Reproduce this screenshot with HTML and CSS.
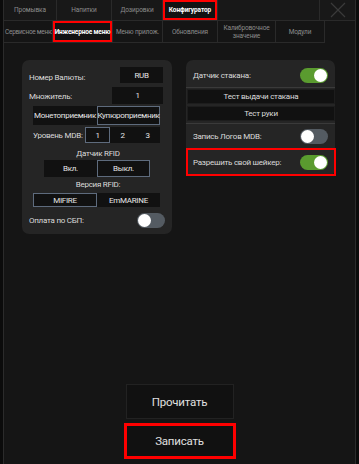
FILE: index.html
```html
<!DOCTYPE html>
<html>
	<head>
		<meta charset="UTF-8">
		<title>Конфигуратор</title>
		<link rel="stylesheet" href="styles.css">
	</head>
	<body>

		<!--рамка экрана-->
		<div class="screen">

			<!--верхние вкладки-->
			<div class="tabs">
				<div class="tab w53">Промывка</div>
				<div class="tab w55">Напитки</div>
				<div class="tab w51">Дозировки</div>
				<div class="tab w55 active marked">Конфигуратор</div>
				<div class="tab-space"></div>
				<div class="tab close">
					<svg width="16" height="16" viewBox="0 0 16 16">
						<path d="M1 1 L15 15 M15 1 L1 15" stroke="#3a3a3a" stroke-width="1.2" fill="none"/>
					</svg>
				</div>
			</div>

			<!--вкладки второго уровня-->
			<div class="subtabs">
				<div class="subtab w49 clip">Сервисное меню</div>
				<div class="subtab w60 active marked">Инженерное меню</div>
				<div class="subtab w50">Меню прилож.</div>
				<div class="subtab w55">Обновления</div>
				<div class="subtab w58">Калибровочное<br>значение</div>
				<div class="subtab w49">Модули</div>
			</div>

			<div class="main">

				<div class="cards">

					<!--левая панель-->
					<div class="card left">
						<div class="row">
							<span class="label">Номер Валюты:</span>
							<span class="box val-rub">RUB</span>
						</div>
						<div class="row">
							<span class="label">Множитель:</span>
							<span class="box val-mul">1</span>
						</div>
						<div class="pair wide">
							<span class="box">Монетоприемник</span>
							<span class="box sel">Купюроприемник</span>
						</div>
						<div class="row mdb">
							<span class="label">Уровень MDB:</span>
							<div class="levels">
								<span class="box sel">1</span>
								<span class="box">2</span>
								<span class="box">3</span>
							</div>
						</div>
						<div class="caption rfid-sensor">Датчик RFID</div>
						<div class="pair narrow">
							<span class="box">Вкл.</span>
							<span class="box sel">Выкл.</span>
						</div>
						<div class="caption rfid-version">Версия RFID:</div>
						<div class="pair wide rfid">
							<span class="box sel">MIFIRE</span>
							<span class="box">EmMARINE</span>
						</div>
						<div class="row toggle-row">
							<span class="label">Оплата по СБП:</span>
							<span class="toggle"></span>
						</div>
					</div>

					<!--правая панель-->
					<div class="card right">
						<div class="row toggle-row first">
							<span class="label">Датчик стакана:</span>
							<span class="toggle on"></span>
						</div>
						<div class="line"></div>
						<div class="test">Тест выдачи стакана</div>
						<div class="test">Тест руки</div>
						<div class="line"></div>
						<div class="row toggle-row">
							<span class="label">Запись Логов MDB:</span>
							<span class="toggle"></span>
						</div>
						<div class="row toggle-row marked shaker">
							<span class="label">Разрешить свой шейкер:</span>
							<span class="toggle on"></span>
						</div>
					</div>

				</div>

				<!--кнопки внизу-->
				<div class="actions">
					<div class="btn">Прочитать</div>
					<div class="btn marked write">Записать</div>
				</div>

			</div>

		</div>

	</body>
</html>
```

FILE: styles.css
```css
/*去除默认样式*/
*{
	margin: 0;
	padding: 0;
	box-sizing: border-box;
}

body{
	width: 359px;
	height: 464px;
	overflow: hidden;
	background-color: #0b0b0b;
	font-family: Roboto, "Noto Sans", sans-serif;
	color: #d8d8d8;
}

/*рамка*/
.screen{
	height: 464px;
	margin: 0 3px;
	border-left: 1px solid #2b2b2b;
	border-right: 1px solid #2b2b2b;
	background-color: #151515;
	display: flex;
	flex-direction: column;
}

/*вкладки*/
.tabs{
	display: flex;
	height: 21px;
	background-color: #181818;
}

.tab{
	display: flex;
	align-items: center;
	justify-content: center;
	font-size: 6.5px;
	letter-spacing: -0.1px;
	color: #8c8c8c;
	border-right: 1px solid #2a2a2a;
	border-bottom: 1px solid #2a2a2a;
}

.tab-space{
	flex: 1;
	border-bottom: 1px solid #2a2a2a;
}

.tab.close{
	width: 36px;
	border-left: 1px solid #2a2a2a;
	border-right: none;
}

.subtabs{
	display: flex;
	height: 22px;
}

.subtab{
	display: flex;
	align-items: center;
	justify-content: center;
	text-align: center;
	font-size: 6.5px;
	letter-spacing: -0.15px;
	line-height: 8px;
	color: #8c8c8c;
	white-space: nowrap;
	overflow: hidden;
	border-right: 1px solid #2a2a2a;
	border-bottom: 1px solid #2a2a2a;
}

.subtab.clip{
	letter-spacing: -0.3px;
	padding-left: 2px;
}

.active{
	color: #ffffff;
	font-weight: bold;
	background-color: #121212;
}

.w49{ width: 49px; }
.w50{ width: 50px; }
.w51{ width: 51px; }
.w53{ width: 53px; }
.w55{ width: 55px; }
.w58{ width: 58px; }
.w60{ width: 60px; }

/*красная рамка*/
.marked{
	box-shadow: inset 0 0 0 2px #ff0000;
}

.main{
	flex: 1;
	display: flex;
	flex-direction: column;
	padding: 17px 18px 5px 18px;
}

.cards{
	display: flex;
	align-items: flex-start;
	gap: 14px;
}

.card{
	background-color: #252525;
	border-radius: 7px;
}

.card.left{
	width: 150px;
	padding: 7px 9px 6px 7px;
}

.card.right{
	width: 149px;
	padding: 4px 0 0 0;
}

.row{
	display: flex;
	align-items: center;
	justify-content: space-between;
}

.label{
	font-size: 8px;
	letter-spacing: -0.25px;
	white-space: nowrap;
	color: #dadada;
}

.box{
	display: flex;
	align-items: center;
	justify-content: center;
	height: 16px;
	background-color: #111111;
	border: 1px solid #111111;
	font-size: 8px;
	letter-spacing: -0.3px;
	white-space: nowrap;
	color: #e6e6e6;
}

.box.sel{
	border-color: #5e6b7d;
}

.val-rub{
	width: 43px;
	margin-bottom: 4px;
}

.val-mul{
	width: 51px;
	height: 17px;
	margin-bottom: 2px;
}

.pair{
	display: flex;
	margin-left: 4px;
}

.pair .box{
	width: 64px;
	height: 19px;
}

.pair.wide .box + .box{
	width: 63px;
}

.pair.narrow{
	margin-left: 15px;
}

.pair.narrow .box{
	width: 53px;
	height: 17px;
}

.pair.rfid .box{
	height: 14px;
}

.mdb{
	margin: 2px 3px 0 4px;
}

.levels{
	display: flex;
}

.levels .box{
	width: 25px;
	height: 16px;
}

.caption{
	text-align: center;
	font-size: 8px;
	letter-spacing: -0.25px;
	color: #dadada;
	margin-left: 4px;
}

.rfid-sensor{
	margin-top: 6px;
	margin-bottom: 2px;
}

.rfid-version{
	margin-top: 3px;
	margin-bottom: 4px;
}

.toggle-row{
	height: 16px;
	margin-top: 5px;
	margin-right: -2px;
}

/*переключатель*/
.toggle{
	position: relative;
	display: block;
	width: 28px;
	height: 15px;
	border-radius: 8px;
	background-color: #545b62;
}

.toggle::after{
	content: "";
	position: absolute;
	left: 1px;
	top: 1px;
	width: 13px;
	height: 13px;
	border-radius: 50%;
	background-color: #ffffff;
}

.toggle.on{
	background-color: #5a9b2f;
}

.toggle.on::after{
	left: 14px;
}

.card.right .toggle-row{
	padding: 0 7px 0 7px;
	margin: 0;
	height: 23px;
}

.line{
	height: 1px;
	background-color: #3a3a3a;
	margin-bottom: 1px;
}

.test{
	height: 15px;
	margin: 0 0 2px 1px;
	background-color: #111111;
	border: 1px solid #1d1d1d;
	font-size: 8px;
	letter-spacing: -0.25px;
	color: #dcdcdc;
	display: flex;
	align-items: center;
	justify-content: center;
}

.card.right .shaker{
	height: 28px;
	margin: 0 -1px 0 0;
	padding-right: 8px;
}

/*кнопки*/
.actions{
	margin-top: auto;
	display: flex;
	flex-direction: column;
	align-items: center;
	gap: 4px;
}

.btn{
	width: 108px;
	height: 35px;
	display: flex;
	align-items: center;
	justify-content: center;
	background-color: #111111;
	border: 1px solid #222222;
	font-size: 11.5px;
	letter-spacing: -0.2px;
	color: #e0e0e0;
}

.btn.write{
	width: 112px;
	height: 36px;
	border: none;
	box-shadow: inset 0 0 0 3px #ff0000;
}
```
